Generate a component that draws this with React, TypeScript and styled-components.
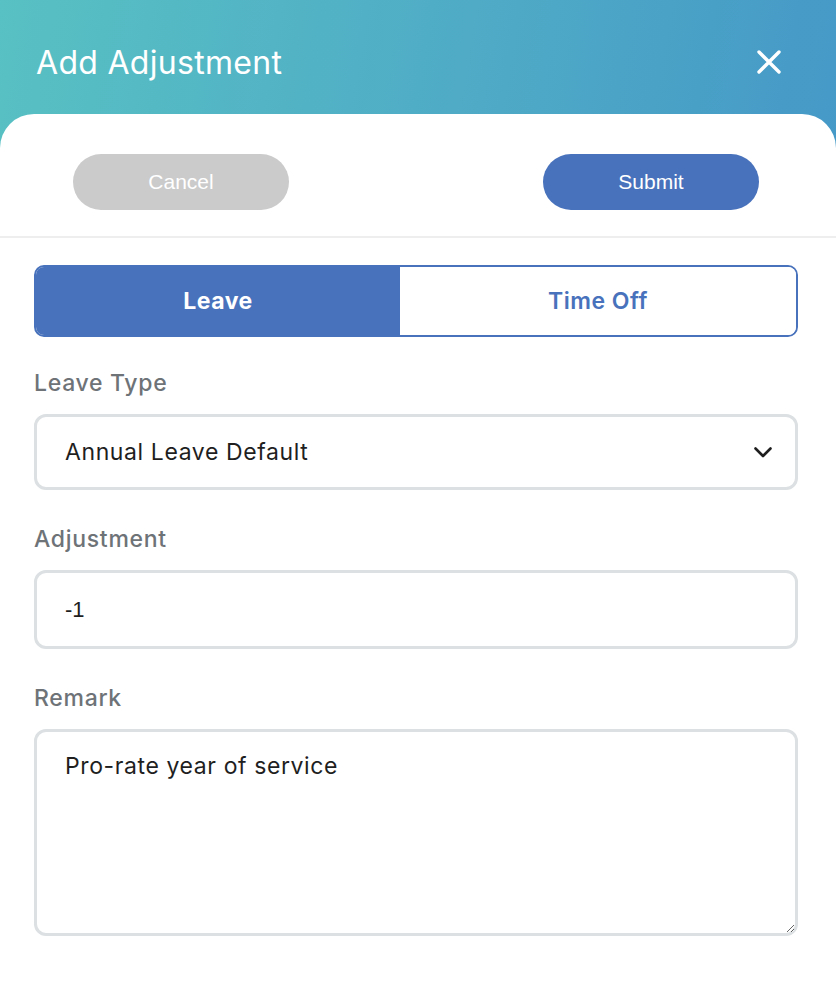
import React from 'react'
import styled, { createGlobalStyle } from 'styled-components'

const GlobalStyle = createGlobalStyle`
  html, body {
    margin: 0;
    padding: 0;
    background: #ffffff;
  }
  * {
    box-sizing: border-box;
  }
`

const Screen = styled.div`
  width: 836px;
  min-height: 1000px;
  background-color: #ffffff;
  background-image: linear-gradient(100deg, #58c1c3 0%, #4fabc6 55%, #4599c7 100%);
  background-size: 100% 170px;
  background-repeat: no-repeat;
  font-family: Inter, 'Noto Sans', sans-serif;
`

const Header = styled.header`
  height: 114px;
  display: flex;
  align-items: center;
  justify-content: space-between;
  padding: 10px 54px 0 36px;
`

const Title = styled.h1`
  margin: 0;
  color: #ffffff;
  font-size: 32px;
  font-weight: 400;
  letter-spacing: 0.3px;
`

const CloseButton = styled.button`
  border: none;
  background: none;
  padding: 0;
  width: 26px;
  height: 26px;
  display: flex;
  align-items: center;
  justify-content: center;
  cursor: pointer;
`

const Panel = styled.main`
  background: #ffffff;
  border-radius: 34px 34px 0 0;
  min-height: 886px;
`

const ActionBar = styled.div`
  display: flex;
  justify-content: space-between;
  padding: 40px 77px 26px 73px;
  border-bottom: 2px solid #eeeeee;
`

const PillButton = styled.button<{ $primary?: boolean }>`
  width: 216px;
  height: 56px;
  border: none;
  border-radius: 28px;
  background: ${({ $primary }) => ($primary ? '#4872bc' : '#cbcbcb')};
  color: #ffffff;
  font-family: 'Liberation Sans', Arial, sans-serif;
  font-size: 21px;
  cursor: pointer;
`

const Form = styled.div`
  padding: 27px 38px 40px 34px;
  display: flex;
  flex-direction: column;
`

const Segmented = styled.div`
  display: grid;
  grid-template-columns: 364px 1fr;
  height: 72px;
  border: 2px solid #4872bc;
  border-radius: 10px;
  overflow: hidden;
  margin-bottom: 31px;
`

const Segment = styled.button<{ $active?: boolean }>`
  border: none;
  background: ${({ $active }) => ($active ? '#4872bc' : '#ffffff')};
  color: ${({ $active }) => ($active ? '#ffffff' : '#4872bc')};
  font-family: Inter, 'Noto Sans', sans-serif;
  font-size: 23px;
  font-weight: ${({ $active }) => ($active ? 700 : 600)};
  letter-spacing: 0.5px;
  cursor: pointer;
`

const Field = styled.div`
  display: flex;
  flex-direction: column;
  margin-bottom: 34px;
`

const Label = styled.label`
  color: #6e7378;
  font-size: 23px;
  font-weight: 500;
  letter-spacing: 0.7px;
  line-height: 30px;
  margin-bottom: 16px;
`

const boxStyles = `
  width: 100%;
  border: 3px solid #dce0e2;
  border-radius: 12px;
  background: #ffffff;
  color: #1f1f1f;
  outline: none;
`

const SelectBox = styled.div`
  ${boxStyles}
  height: 76px;
  display: flex;
  align-items: center;
  justify-content: space-between;
  padding: 0 23px 0 28px;
  font-size: 23px;
  letter-spacing: 0.6px;
`

const TextInput = styled.input`
  ${boxStyles}
  height: 79px;
  padding: 0 28px;
  font-family: 'Liberation Sans', Arial, sans-serif;
  font-size: 22px;
`

const TextArea = styled.textarea`
  ${boxStyles}
  height: 207px;
  padding: 19px 28px;
  font-family: Inter, 'Noto Sans', sans-serif;
  font-size: 23px;
  letter-spacing: 0.6px;
  line-height: 30px;
  resize: vertical;
`

const Chevron = () => (
  <svg width="18" height="11" viewBox="0 0 18 11" fill="none">
    <path d="M1.5 1.5 L9 9 L16.5 1.5" stroke="#1f1f1f" strokeWidth="2.6" strokeLinecap="round" strokeLinejoin="round" />
  </svg>
)

const CloseIcon = () => (
  <svg width="24" height="24" viewBox="0 0 24 24" fill="none">
    <path d="M2 2 L22 22 M22 2 L2 22" stroke="#ffffff" strokeWidth="3.4" strokeLinecap="round" />
  </svg>
)

export default function App() {
  return (
    <Screen>
      <GlobalStyle />
      <Header>
        <Title>Add Adjustment</Title>
        <CloseButton aria-label="Close">
          <CloseIcon />
        </CloseButton>
      </Header>
      <Panel>
        <ActionBar>
          <PillButton>Cancel</PillButton>
          <PillButton $primary>Submit</PillButton>
        </ActionBar>
        <Form>
          <Segmented>
            <Segment $active>Leave</Segment>
            <Segment>Time Off</Segment>
          </Segmented>

          <Field>
            <Label>Leave Type</Label>
            <SelectBox>
              <span>Annual Leave Default</span>
              <Chevron />
            </SelectBox>
          </Field>

          <Field>
            <Label>Adjustment</Label>
            <TextInput readOnly defaultValue="-1" />
          </Field>

          <Field>
            <Label>Remark</Label>
            <TextArea readOnly defaultValue="Pro-rate year of service" />
          </Field>
        </Form>
      </Panel>
    </Screen>
  )
}
